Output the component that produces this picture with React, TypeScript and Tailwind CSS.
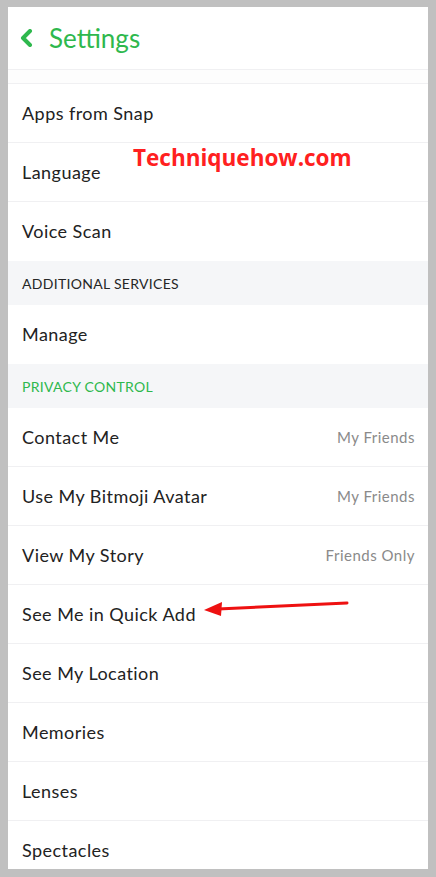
const rows1 = ["Apps from Snap", "Language", "Voice Scan"];

const privacy: [string, string?][] = [
  ["Contact Me", "My Friends"],
  ["Use My Bitmoji Avatar", "My Friends"],
  ["View My Story", "Friends Only"],
  ["See Me in Quick Add"],
  ["See My Location"],
  ["Memories"],
  ["Lenses"],
  ["Spectacles"],
];

const Row = ({ label, value, last }: { label: string; value?: string; last?: boolean }) => (
  <div
    className={`relative flex h-[59px] shrink-0 items-center justify-between pl-[14px] pr-[13px] ${
      last ? "" : "border-b border-[#f0f0f2]"
    }`}
  >
    <span className="text-[18px] tracking-[0.45px] text-[#222222]">{label}</span>
    {value && <span className="text-[15px] tracking-[0.5px] text-[#8a8a8a]">{value}</span>}
  </div>
);

const Section = ({ title, green }: { title: string; green?: boolean }) => (
  <div className="flex h-[44px] shrink-0 items-center bg-[#f5f6f8] pl-[14px]">
    <span className={`text-[14px] tracking-[0.3px] ${green ? "text-[#2eb84d]" : "text-[#262626]"}`}>{title}</span>
  </div>
);

export default function App() {
  return (
    <div
      className="h-[877px] w-[436px] overflow-hidden bg-[#c0c0c0] px-[8px] pt-[7px]"
      style={{ fontFamily: "Lato, 'Noto Sans', sans-serif" }}
    >
      <div className="relative flex h-[862px] flex-col overflow-hidden bg-white">
        {/* header */}
        <div className="flex h-[63px] shrink-0 items-center gap-[16px] border-b border-[#f0f0f2] pl-[11px]">
          <svg width="14" height="18" viewBox="0 0 14 18">
            <path d="M11 2 L4 9 L11 16" fill="none" stroke="#2eb84d" strokeWidth="4" strokeLinejoin="round" strokeLinecap="round" />
          </svg>
          <span className="text-[26px] text-[#2eb84d]">Settings</span>
        </div>
        <div className="h-[14px] shrink-0 border-b border-[#f0f0f2] bg-[#fdfdfd]" />

        {rows1.map((r, i) => (
          <Row key={r} label={r} last={i === rows1.length - 1} />
        ))}
        <Section title="ADDITIONAL SERVICES" />
        <Row label="Manage" last />
        <Section title="PRIVACY CONTROL" green />
        {privacy.map(([l, v]) => (
          <Row key={l} label={l} value={v} />
        ))}

        {/* watermark */}
        <span
          className="absolute left-[125px] top-[134px] text-[22.5px] font-bold text-[#ff2020]"
          style={{ fontFamily: "'Open Sans', sans-serif" }}
        >
          Techniquehow.com
        </span>

        {/* arrow */}
        <svg className="absolute left-[192px] top-[589px]" width="160" height="24" viewBox="0 0 160 24">
          <path d="M18 13 L147 7" stroke="#ee1111" strokeWidth="3" strokeLinecap="round" />
          <path d="M4 14 L22 6 L21 20 Z" fill="#ee1111" />
        </svg>
      </div>
    </div>
  );
}
